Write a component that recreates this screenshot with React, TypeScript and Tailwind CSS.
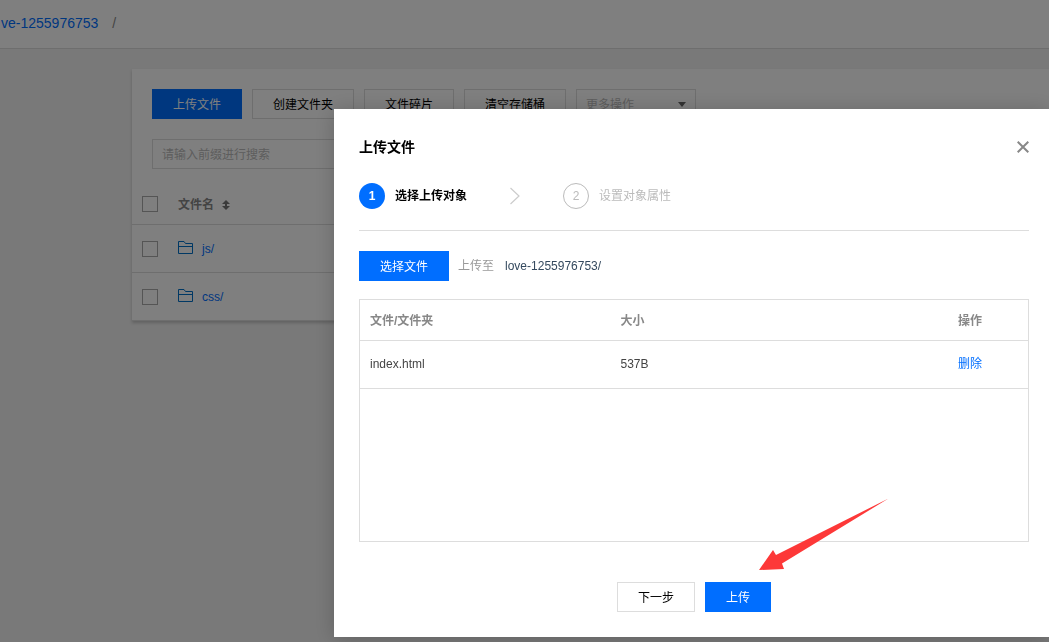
import type { ReactNode } from "react";

interface ButtonProps {
  children: ReactNode;
  primary?: boolean;
}

function Button({ children, primary }: ButtonProps) {
  return (
    <button
      type="button"
      className={
        primary
          ? "h-[30px] shrink-0 border border-[#006eff] bg-[#006eff] px-5 pt-px text-xs text-white"
          : "h-[30px] shrink-0 border border-[#ddd] bg-white px-5 pt-px text-xs text-black"
      }
    >
      {children}
    </button>
  );
}

function Checkbox({ label }: { label: string }) {
  return (
    <input
      type="checkbox"
      aria-label={label}
      className="block size-4 appearance-none border border-[#aaa] bg-white"
    />
  );
}

function FolderIcon() {
  return (
    <svg
      viewBox="0 0 15 14"
      className="mb-1 h-[14px] w-[15px] shrink-0"
      fill="none"
      stroke="#0071c9"
    >
      <path d="M.5 13.500V1.500h5.500l1.500 2h7v10zM.5 6.500h14" />
    </svg>
  );
}

function SortIcon() {
  return (
    <svg viewBox="0 0 8 10" className="h-[10px] w-2" fill="#777">
      <path d="M4 0l4 4H5v2h3l-4 4-4-4h3V4H0z" />
    </svg>
  );
}

function BucketPage() {
  return (
    <>
      <header className="flex h-[49px] items-center overflow-hidden border-b border-[#ddd] bg-white pb-0.5 text-sm">
        <a href="#" className="pl-px text-[#006eff]">
          ve-1255976753
        </a>
        <span className="ml-[14px] text-[#888]">/</span>
      </header>

      <main className="pt-5 pl-[132px]">
        <section className="bg-white pt-5 shadow-[0_2px_3px_rgba(0,0,0,0.2)]">
          {/* Toolbar */}
          <div className="flex gap-2.5 px-5">
            <Button primary>上传文件</Button>
            <Button>创建文件夹</Button>
            <Button>文件碎片</Button>
            <Button>清空存储桶</Button>
            <div className="relative">
              <select
                disabled
                aria-label="更多操作"
                className="h-[30px] w-[120px] appearance-none border border-[#ddd] bg-white px-[9px] pt-px text-xs text-[#bbb] opacity-100"
              >
                <option>更多操作</option>
              </select>
              <svg
                viewBox="0 0 8 5"
                className="pointer-events-none absolute top-[13px] right-2.5 h-[5px] w-2"
                fill="#666"
              >
                <path d="M0 0h8L4 5z" />
              </svg>
            </div>
          </div>

          {/* Search */}
          <div className="mt-5 px-5">
            <input
              type="text"
              aria-label="搜索"
              placeholder="请输入前缀进行搜索"
              className="block h-[30px] w-80 border border-[#ddd] bg-white px-[9px] pt-px text-xs placeholder:text-[#bbb]"
            />
          </div>

          {/* File list */}
          <table className="mt-[15px] w-full table-fixed border-separate border-spacing-0 text-xs">
            <thead>
              <tr className="h-[41px]">
                <th className="w-9 border-b border-[#ddd] pl-2.5">
                  <Checkbox label="全选" />
                </th>
                <th className="border-b border-[#ddd] pt-0.5 pl-2.5 text-left text-[#888]">
                  <div className="flex items-center gap-2">
                    文件名
                    <SortIcon />
                  </div>
                </th>
              </tr>
            </thead>
            <tbody>
              {FOLDERS.map((name) => (
                <tr key={name} className="h-12">
                  <td className="border-b border-[#ddd] pl-2.5">
                    <Checkbox label={name} />
                  </td>
                  <td className="border-b border-[#ddd] pl-2.5">
                    <a
                      href="#"
                      className="flex items-center gap-[9px] text-[#006eff]"
                    >
                      <FolderIcon />
                      {name}
                    </a>
                  </td>
                </tr>
              ))}
            </tbody>
          </table>
        </section>
      </main>
    </>
  );
}

function Steps() {
  return (
    <ol className="mt-[26px] flex items-center border-b border-[#ddd] pb-[21px] text-xs">
      <li className="flex items-center gap-2.5 font-bold text-black">
        <span className="flex size-[26px] items-center justify-center rounded-full bg-[#006eff] text-white">
          1
        </span>
        选择上传对象
      </li>
      <li aria-hidden className="mx-[43px]">
        <svg
          viewBox="0 0 10 18"
          className="h-[18px] w-[10px]"
          fill="none"
          stroke="#ccc"
          strokeWidth="1.2"
        >
          <path d="M.5 1l8.500 8-8.500 8" />
        </svg>
      </li>
      <li className="flex items-center gap-2.5 text-[#bbb]">
        <span className="flex size-[26px] items-center justify-center rounded-full border border-[#bbb]">
          2
        </span>
        设置对象属性
      </li>
    </ol>
  );
}

function UploadDialog() {
  return (
    <div
      role="dialog"
      aria-labelledby="upload-title"
      className="bg-white pt-7 pr-5 pb-[25px] pl-[25px] shadow-[0_2px_20px_rgba(0,0,0,0.2)]"
    >
      <div className="flex h-5 items-center justify-between">
        <h2 id="upload-title" className="text-sm font-bold text-black">
          上传文件
        </h2>
        <button type="button" aria-label="关闭">
          <svg
            viewBox="0 0 12 12"
            className="size-3"
            fill="none"
            stroke="#888"
            strokeWidth="2"
          >
            <path d="M.7.7l10.600 10.600M11.300.7L.7 11.300" />
          </svg>
        </button>
      </div>

      <Steps />

      <div className="mt-5 flex items-center text-xs">
        <Button primary>选择文件</Button>
        <span className="ml-[9px] text-[#999]">上传至</span>
        <span className="ml-[11px] text-[#34495e]">love-1255976753/</span>
      </div>

      {/* Selected files */}
      <div className="mt-[18px] min-h-[243px] border border-[#ddd]">
        <table className="w-full table-fixed border-separate border-spacing-0 text-left text-xs">
          <thead className="text-[#888]">
            <tr className="h-[41px]">
              <th className="w-3/8 border-b border-[#ddd] pt-px pl-2.5">
                文件/文件夹
              </th>
              <th className="border-b border-[#ddd] pt-px pl-2.5">大小</th>
              <th className="w-20 border-b border-[#ddd] pt-px pl-2.5">
                操作
              </th>
            </tr>
          </thead>
          <tbody className="text-[#444]">
            {FILES.map((file) => (
              <tr key={file.name} className="h-12">
                <td className="border-b border-[#ddd] pb-px pl-2.5">
                  {file.name}
                </td>
                <td className="border-b border-[#ddd] pb-px pl-2.5">
                  {file.size}
                </td>
                <td className="border-b border-[#ddd] pb-px pl-2.5">
                  <a href="#" className="text-[#006eff]">
                    删除
                  </a>
                </td>
              </tr>
            ))}
          </tbody>
        </table>
      </div>

      <div className="mt-10 flex justify-center gap-2.5">
        <Button>下一步</Button>
        <div className="relative flex">
          <Button primary>上传</Button>
          {/* Pointer to the upload button */}
          <svg
            viewBox="0 0 130 73"
            className="pointer-events-none absolute bottom-full left-[54px] mb-[11px] h-[73px] w-[130px] max-w-none"
            fill="#fd3838"
          >
            <path d="M0 72L14 52l3 5L129.500.5 23 65.500l2 5.500z" />
          </svg>
        </div>
      </div>
    </div>
  );
}

export default function App() {
  return (
    <div className="min-h-screen bg-[#f2f2f2] font-['Liberation_Sans','Noto_Sans_CJK_SC',sans-serif]">
      <BucketPage />
      <div className="fixed inset-0 overflow-hidden bg-black/50 pt-[109px] pl-[334px]">
        <UploadDialog />
      </div>
    </div>
  );
}

const FOLDERS = ["js/", "css/"];

const FILES = [{ name: "index.html", size: "537B" }];
